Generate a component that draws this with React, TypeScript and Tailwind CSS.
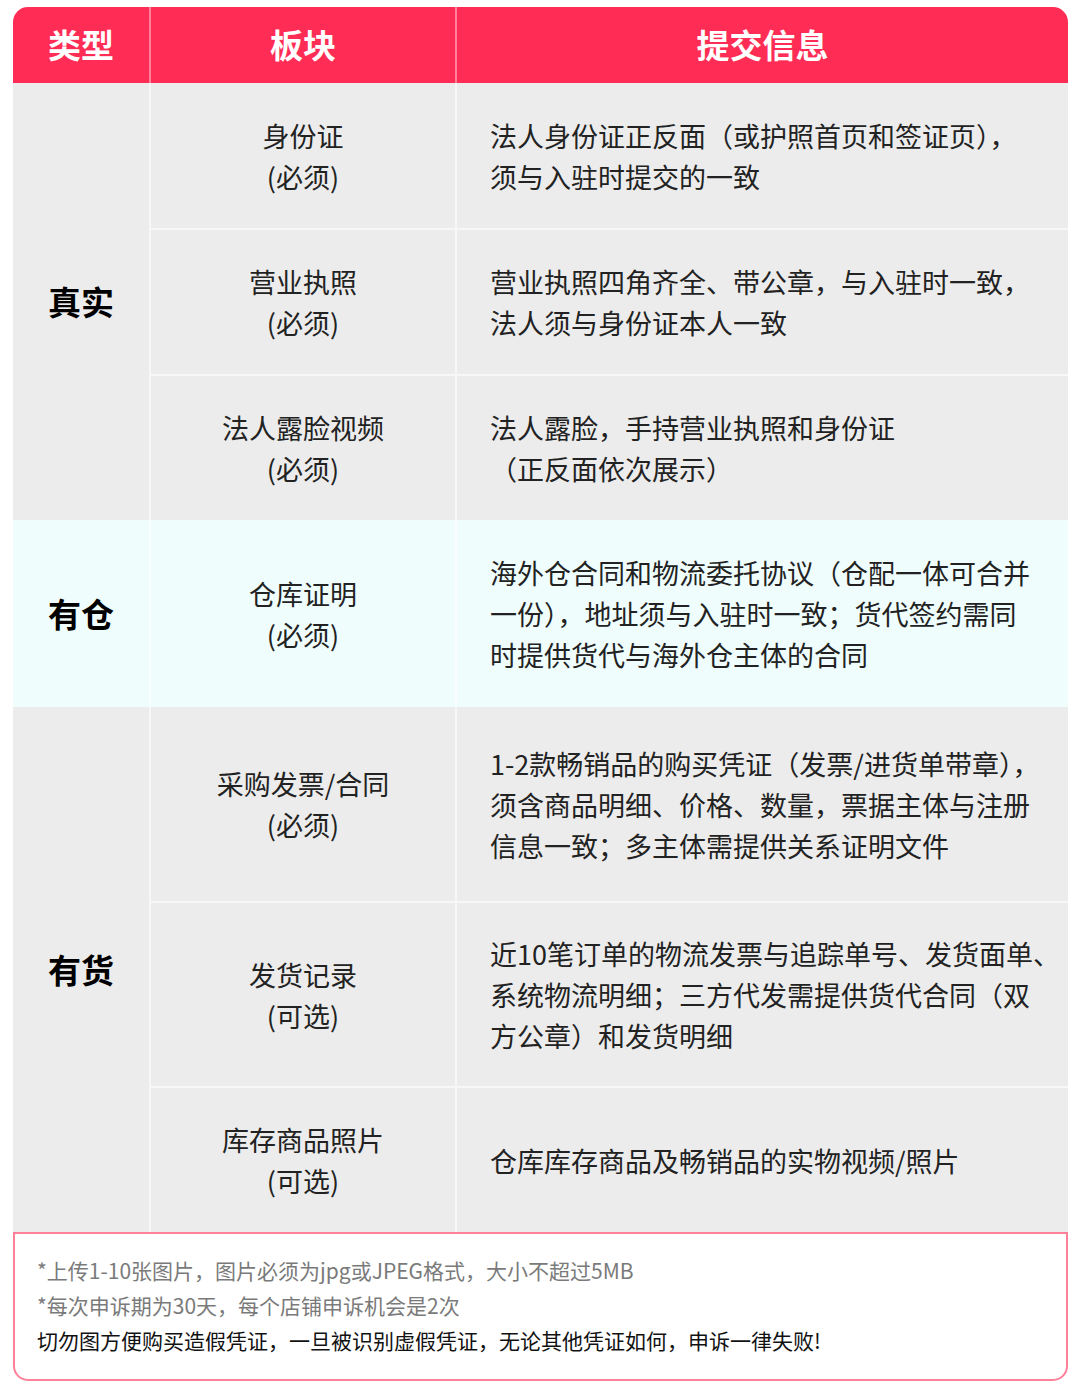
const font = { fontFamily: '"Noto Sans CJK SC", "Noto Sans", sans-serif' }

type Item = { name: string; need: string; desc: string[]; h: string }
type Group = { label: string; bg: string; items: Item[] }

const groups: Group[] = [
  {
    label: '真实',
    bg: 'bg-[#ececec]',
    items: [
      { name: '身份证', need: '(必须)', h: 'h-[146px]', desc: ['法人身份证正反面（或护照首页和签证页），', '须与入驻时提交的一致'] },
      { name: '营业执照', need: '(必须)', h: 'h-[146px]', desc: ['营业执照四角齐全、带公章，与入驻时一致，', '法人须与身份证本人一致'] },
      { name: '法人露脸视频', need: '(必须)', h: 'h-[145px]', desc: ['法人露脸，手持营业执照和身份证', '（正反面依次展示）'] },
    ],
  },
  {
    label: '有仓',
    bg: 'bg-[#effdfd]',
    items: [
      { name: '仓库证明', need: '(必须)', h: 'h-[187px]', desc: ['海外仓合同和物流委托协议（仓配一体可合并', '一份），地址须与入驻时一致；货代签约需同', '时提供货代与海外仓主体的合同'] },
    ],
  },
  {
    label: '有货',
    bg: 'bg-[#ececec]',
    items: [
      { name: '采购发票/合同', need: '(必须)', h: 'h-[195px]', desc: ['1-2款畅销品的购买凭证（发票/进货单带章），', '须含商品明细、价格、数量，票据主体与注册', '信息一致；多主体需提供关系证明文件'] },
      { name: '发货记录', need: '(可选)', h: 'h-[185px]', desc: ['近10笔订单的物流发票与追踪单号、发货面单、', '系统物流明细；三方代发需提供货代合同（双', '方公章）和发货明细'] },
      { name: '库存商品照片', need: '(可选)', h: 'h-[145px]', desc: ['仓库库存商品及畅销品的实物视频/照片'] },
    ],
  },
]

export default function App() {
  return (
    <div className="min-h-screen bg-white pt-[7px] pl-[13px]" style={font}>
      <div className="w-[1055px]">
        <div className="rounded-t-[15px] overflow-hidden">
          <table className="w-full border-collapse table-fixed">
            <colgroup>
              <col className="w-[137px]" />
              <col className="w-[306px]" />
              <col className="w-[612px]" />
            </colgroup>
            <thead>
              <tr className="h-[76px] bg-[#ff2d55] text-white text-[33px] font-bold">
                <th className="text-center">类型</th>
                <th className="text-center border-l-2 border-white/40">板块</th>
                <th className="text-center border-l-2 border-white/40">提交信息</th>
              </tr>
            </thead>
            <tbody className="text-[#222] text-[27px] leading-[41px]">
              {groups.map(g =>
                g.items.map((it, i) => (
                  <tr key={it.name} className={`${g.bg} ${it.h} ${i > 0 ? 'border-t-2 border-white/60' : ''}`}>
                    {i === 0 && (
                      <td rowSpan={g.items.length} className="text-center font-bold text-[33px] text-black">
                        {g.label}
                      </td>
                    )}
                    <td className="text-center border-l-2 border-white/60 whitespace-nowrap">
                      <div>{it.name}</div>
                      <div>{it.need}</div>
                    </td>
                    <td className="pl-[33px] border-l-2 border-white/60 whitespace-nowrap">
                      {it.desc.map(d => <div key={d}>{d}</div>)}
                    </td>
                  </tr>
                ))
              )}
            </tbody>
          </table>
        </div>
        <div className="rounded-b-[15px] border-2 border-[#ff8199] bg-white px-[22px] pt-[19px] pb-[21px] text-[21px] leading-[35px] whitespace-nowrap">
          <div className="text-[#7a7a7a]">*上传1-10张图片，图片必须为jpg或JPEG格式，大小不超过5MB</div>
          <div className="text-[#7a7a7a]">*每次申诉期为30天，每个店铺申诉机会是2次</div>
          <div className="text-[#111]">切勿图方便购买造假凭证，一旦被识别虚假凭证，无论其他凭证如何，申诉一律失败!</div>
        </div>
      </div>
    </div>
  )
}
